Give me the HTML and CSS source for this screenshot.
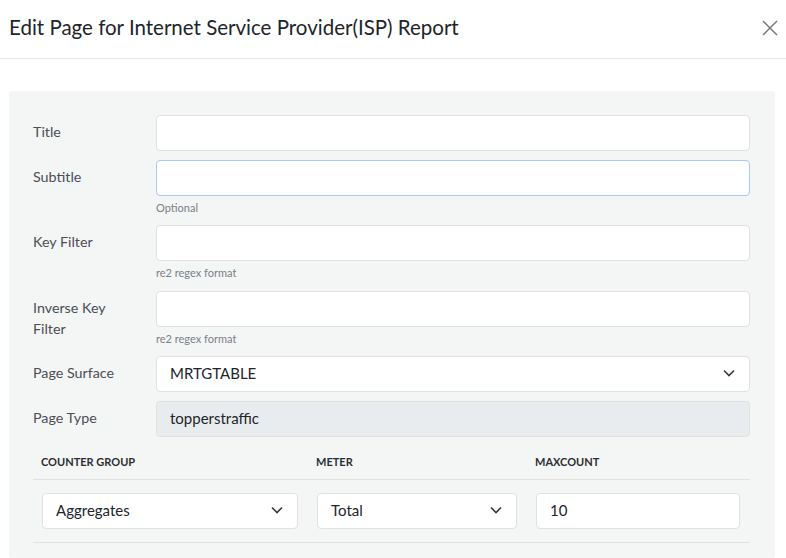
FILE: index.html
```html
<!DOCTYPE html>
<html>
<head>
<meta charset="utf-8">
<link rel="stylesheet" href="styles.css">
</head>
<body>
<div class="modal">
  <div class="modal-header">
    <h1 class="modal-title">Edit Page for Internet Service Provider(ISP) Report</h1>
    <button class="close" aria-label="Close">
      <svg width="16" height="16" viewBox="0 0 16 16"><path d="M1 1 L15 15 M15 1 L1 15" stroke="#7a7a7a" stroke-width="1.5" fill="none"/></svg>
    </button>
  </div>
  <div class="modal-body">
    <div class="panel">
      <div class="form-row">
        <label class="form-label">Title</label>
        <div class="form-field"><div class="input"></div></div>
      </div>
      <div class="form-row">
        <label class="form-label">Subtitle</label>
        <div class="form-field"><div class="input focused"></div><div class="hint">Optional</div></div>
      </div>
      <div class="form-row">
        <label class="form-label">Key Filter</label>
        <div class="form-field"><div class="input"></div><div class="hint">re2 regex format</div></div>
      </div>
      <div class="form-row">
        <label class="form-label">Inverse Key Filter</label>
        <div class="form-field"><div class="input"></div><div class="hint">re2 regex format</div></div>
      </div>
      <div class="form-row">
        <label class="form-label">Page Surface</label>
        <div class="form-field"><div class="input select"><span>MRTGTABLE</span><svg class="chev" width="12" height="8" viewBox="0 0 12 8"><path d="M1 1.5 L6 6.5 L11 1.5" stroke="#343a40" stroke-width="1.6" fill="none"/></svg></div></div>
      </div>
      <div class="form-row">
        <label class="form-label">Page Type</label>
        <div class="form-field"><div class="input disabled"><span>topperstraffic</span></div></div>
      </div>
      <table class="grid">
        <thead>
          <tr><th class="c1">Counter Group</th><th class="c2">Meter</th><th class="c3">Maxcount</th></tr>
        </thead>
        <tbody>
          <tr>
            <td><div class="input select"><span>Aggregates</span><svg class="chev" width="12" height="8" viewBox="0 0 12 8"><path d="M1 1.5 L6 6.5 L11 1.5" stroke="#343a40" stroke-width="1.6" fill="none"/></svg></div></td>
            <td><div class="input select"><span>Total</span><svg class="chev" width="12" height="8" viewBox="0 0 12 8"><path d="M1 1.5 L6 6.5 L11 1.5" stroke="#343a40" stroke-width="1.6" fill="none"/></svg></div></td>
            <td><div class="input"><span>10</span></div></td>
          </tr>
        </tbody>
      </table>
    </div>
  </div>
</div>
</body>
</html>
```
FILE: styles.css
```css
* { box-sizing: border-box; }
html, body { margin: 0; padding: 0; background: #fff; }
body {
  font-family: "Lato", "Noto Sans", sans-serif;
  color: #212529;
  overflow: hidden;
}
.modal-header {
  height: 59px;
  padding: 0 9px;
  border-bottom: 1px solid #e6e6e6;
  display: flex;
  align-items: center;
  justify-content: space-between;
}
.modal-title {
  margin: 0;
  font-size: 20.5px;
  font-weight: 400;
  color: #212529;
  line-height: 1;
  padding-bottom: 4px;
}
.close {
  background: none;
  border: 0;
  padding: 0;
  margin-right: -1px;
  display: flex;
  padding-bottom: 3px;
}
.modal-body { padding: 32px 11px 0 9px; }
.panel {
  background: #f4f5f5;
  border-radius: 4px;
  padding: 24px 25px 16px 24px;
}
.form-row {
  display: flex;
  margin-bottom: 9px;
}
.form-label {
  width: 123px;
  flex: none;
  padding: 6px 24px 0 0;
  font-size: 14.3px;
  line-height: 21px;
  color: #4a4f55;
}
.form-field { flex: 1; }
.input {
  height: 36px;
  background: #fff;
  border: 1px solid #e3e1de;
  border-radius: 4px;
  display: flex;
  align-items: center;
  padding: 0 13px 2px 13px;
  font-size: 15px;
  color: #212529;
}
.input.focused { border-color: #a9c8f5; }
.input.disabled { background: #e9ecef; }
.select { justify-content: space-between; }
.chev { flex: none; margin-right: 1px; margin-top: 1px; }
.hint {
  margin-top: 4px;
  font-size: 11px;
  line-height: 16.33px;
  color: #7a8187;
}
.grid {
  width: 100%;
  border-collapse: collapse;
  margin-top: 13px;
  table-layout: fixed;
}
.grid th {
  text-align: left;
  text-transform: uppercase;
  font-size: 11px;
  font-weight: 700;
  line-height: 16px;
  color: #2b2f33;
  padding: 4px 8px 9px 8px;
  border-bottom: 1px solid #e3e1de;
}
.grid th.c1 { width: 275px; }
.grid th.c2 { width: 219px; }
.grid td {
  padding: 13px 10px 13px 9px;
  border-bottom: 1px solid #e3e1de;
}
```
